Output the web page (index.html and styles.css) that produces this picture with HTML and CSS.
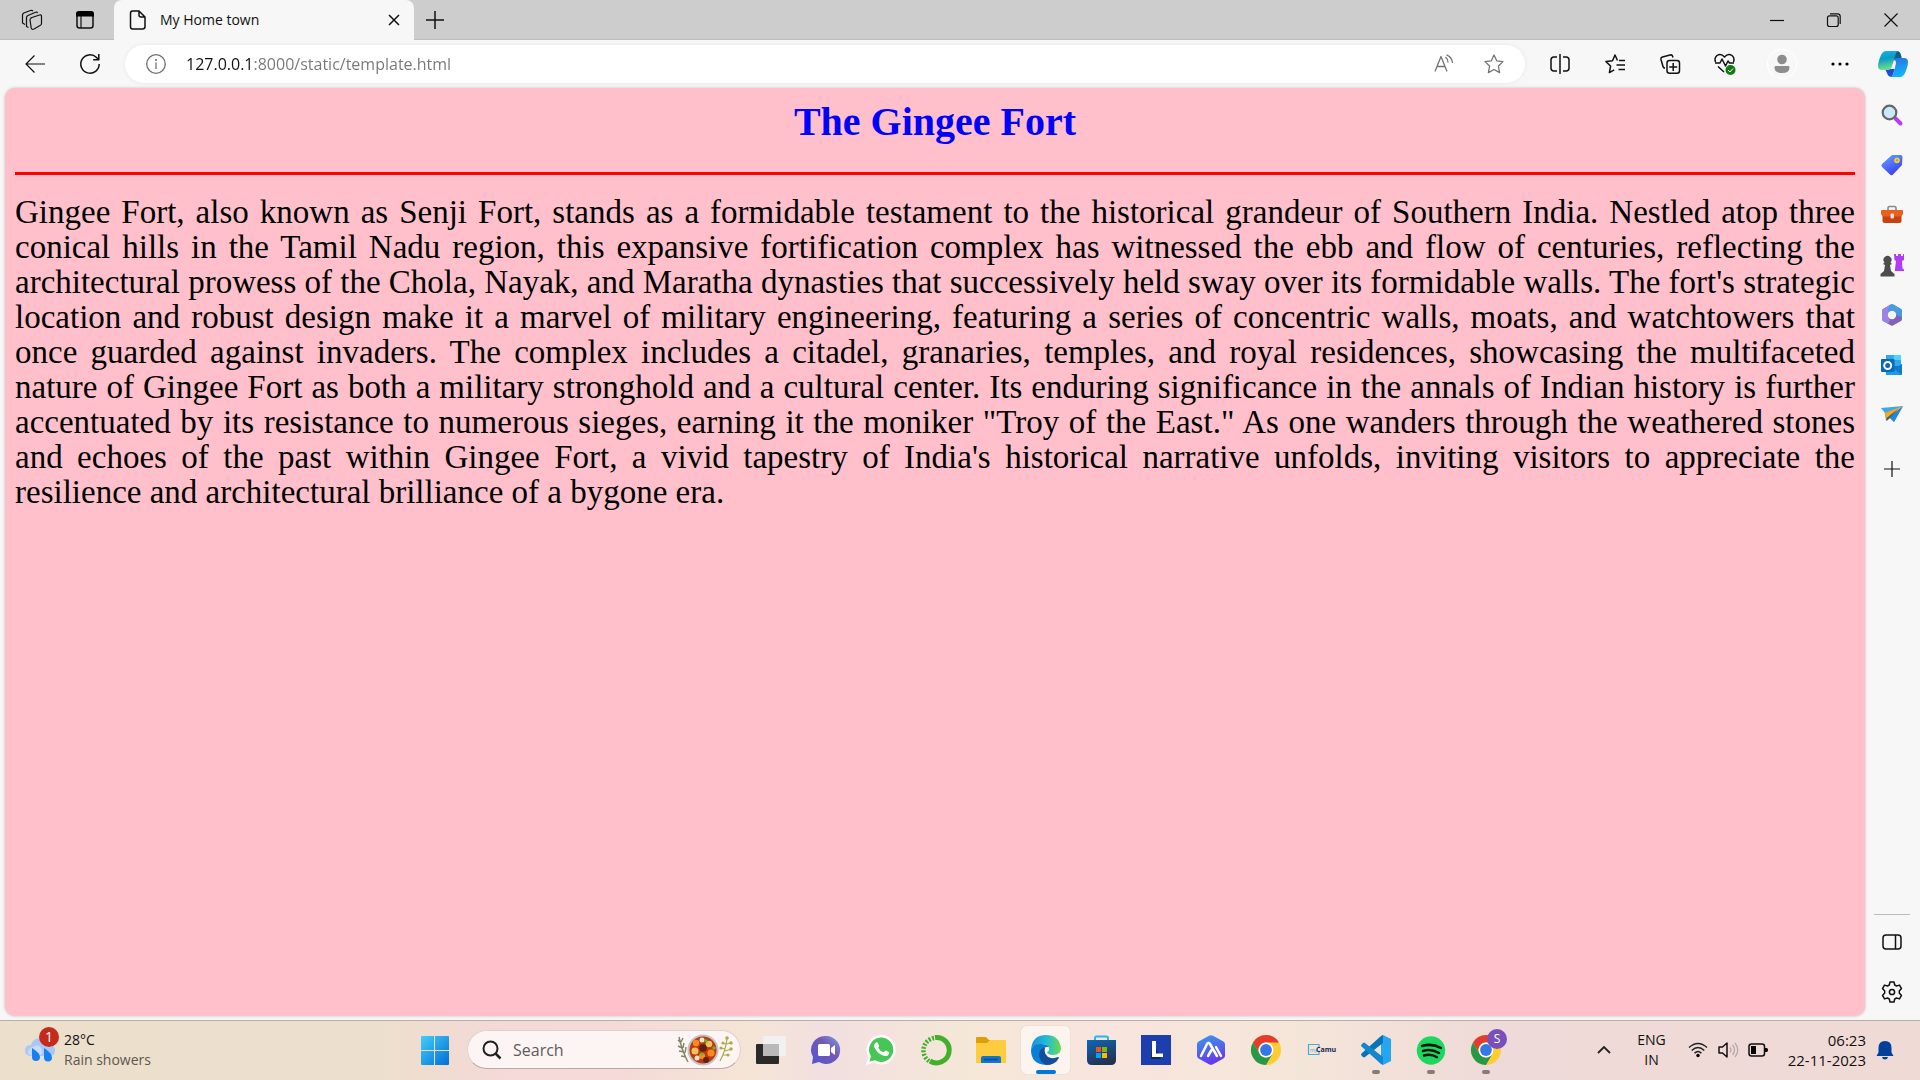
FILE: index.html
```html
<!DOCTYPE html>
<html lang="en">
<head>
<meta charset="utf-8">
<title>My Home town</title>
<link rel="stylesheet" href="styles.css">
</head>
<body>
<div class="desktop">
  <header class="tabstrip">
    <button class="strip-btn" aria-label="Workspaces"><svg class="i22" viewBox="0 0 22 22"><g class="ln"><path d="M9.500 9 18.500 6q2-.6 2 1.500v7q0 1.500-1.500 2l-6 3.500q-2.500 1-2.800-1L9 11q0-1.500 1.500-2z"/><path d="M7.500 18.500 5.500 17.500V8.500q0-1.300 1.500-2l7.500-3.300q1.500-.7 2 1M4 15.500 1.500 14V6q0-1.300 1.300-2L9.500 1.500q1.500-.6 2.500.6"/></g></svg></button>
    <button class="strip-btn" aria-label="Tab actions"><svg class="i20" viewBox="0 0 20 20"><rect class="ln2" x="2" y="2" width="16" height="16" rx="2.500"/><path d="M1 6.500V4q0-3 3-3h12q3 0 3 3v2.500z"/><path class="ln" d="M6 6v12"/></svg></button>
    <div class="tab">
      <svg class="i20" viewBox="0 0 20 20"><path class="ln2" d="M4.500 1H11l6 6v9.500q0 2.500-2.500 2.500h-10Q2.500 19 2.500 16.500v-13Q2.500 1 4.500 1zM11 1v4q0 2 2 2h4"/></svg>
      <span class="tab-title">My Home town</span>
      <button class="tab-close" aria-label="Close tab"><svg class="i12" viewBox="0 0 12 12"><path class="ln2" d="m1 1 10 10M11 1 1 11"/></svg></button>
    </div>
    <button class="new-tab" aria-label="New tab"><svg class="i18" viewBox="0 0 18 18"><path class="ln2" d="M9 0v18M0 9h18"/></svg></button>
    <div class="window-btns">
      <button aria-label="Minimize"><svg class="i14" viewBox="0 0 14 14"><path class="ln" d="M0 7.500h14"/></svg></button>
      <button aria-label="Restore"><svg class="i14" viewBox="0 0 14 14"><path class="ln" d="M3 .8h7.500q2.700 0 2.700 2.700V11M2.500 2.800h6.700q2 0 2 2v6.700q0 2-2 2H2.500q-2 0-2-2V4.800q0-2 2-2z"/></svg></button>
      <button aria-label="Close"><svg class="i14" viewBox="0 0 14 14"><path class="ln" d="m.5.500 13 13M13.500.500l-13 13"/></svg></button>
    </div>
  </header>

  <nav class="toolbar">
    <button class="tool" aria-label="Back"><svg class="i20" viewBox="0 0 20 20"><path class="ln" d="M20 10H1M9.500 1.500 1 10l8.500 8.500"/></svg></button>
    <button class="tool" aria-label="Refresh"><svg class="i20" viewBox="0 0 20 20"><path class="ln2" d="M19.200 10A9.200 9.200 0 1 1 16.500 3.500L18.500 5.500M18.800 0v5.700h-5.600"/></svg></button>
    <div class="address">
      <svg class="i20" viewBox="0 0 20 20"><circle class="gl" cx="10" cy="10" r="9.300"/><path class="gl" d="M10 8.500V15"/><circle cx="10" cy="6" r="1" fill="#666"/></svg>
      <input class="url" type="text" value="127.0.0.1:8000/static/template.html" aria-label="Address">
      <button class="addr-btn" aria-label="Read aloud"><svg class="i20" viewBox="0 0 20 20"><path class="gl" d="M1 17.500 7 2.500l6 15M3 12.500h8M11.500 3q2.500 2 2.500 5.500M12.500.800Q18 3 18.500 9"/></svg></button>
      <button class="addr-btn" aria-label="Favourite"><svg class="i20" viewBox="0 0 20 20"><path class="gl" d="m10 1 2.700 5.800 6.300.8-4.600 4.400 1.200 6.600L10 15.500l-5.600 3.100L5.600 12 1 7.600l6.300-.8z"/></svg></button>
    </div>
    <button class="tool" aria-label="Split screen"><svg class="i20" viewBox="0 0 20 20"><path class="ln2" d="M7 3H4Q1 3 1 6v8q0 3 3 3h3M13 3h3q3 0 3 3v8q0 3-3 3h-3M10 0v20"/></svg></button>
    <button class="tool" aria-label="Favourites"><svg class="i20" viewBox="0 0 20 20"><path class="ln2" d="M12.500 6.500 10 1 7.500 6.800 1 7.600 5.600 12l-1.200 6.600 4.800-2.700M14 6.500h6M11.500 11H20M13.500 15.500H20"/></svg></button>
    <button class="tool" aria-label="Collections"><svg class="i20" viewBox="0 0 20 20"><path class="ln2" d="M13 3.500 12.500 2Q12 .5 10 1L2.500 3Q.5 3.500 1 5.500l2 7q.3 1.500 2 1.800"/><rect class="ln2" x="7" y="6.500" width="12.500" height="12.800" rx="2.500"/><path class="ln2" d="M13.200 9v8M9.200 13h8"/></svg></button>
    <button class="tool" aria-label="Browser essentials"><svg class="i22" viewBox="0 0 22 22"><path class="ln2" d="M1.500 9Q0 5 3 2.500 7-.2 10.500 4 14-.2 18 2.500q3 2.500 1.500 6.500M1 10h5l2-4 3.500 7 2.500-5 1.500 2H20M4 13.500l6 5.500"/><circle cx="16.500" cy="17" r="5" fill="#107c10"/><path d="m14 17 2 2 3-3.500" fill="none" stroke="#fff"/></svg></button>
    <button class="profile" aria-label="Profile"><svg class="i20" viewBox="0 0 20 20"><circle cx="10" cy="5.500" r="4.800" fill="#8d8d8d"/><path d="M3.500 12h13q1 0 1 1.500 0 5.500-7.500 5.500t-7.500-5.500q0-1.500 1-1.500z" fill="#8d8d8d"/></svg></button>
    <button class="tool" aria-label="Settings and more"><svg class="i18" viewBox="0 0 18 18"><circle cx="2" cy="9" r="1.600"/><circle cx="9" cy="9" r="1.600"/><circle cx="16" cy="9" r="1.600"/></svg></button>
    <button class="copilot" aria-label="Copilot"><svg class="i30" viewBox="0 0 30 30">
      <defs><linearGradient id="cpA" x2=".2" y2="1"><stop stop-color="#18b5e8"/><stop offset=".45" stop-color="#0a9bc4"/><stop offset="1" stop-color="#6ce08a"/></linearGradient><linearGradient id="cpB" x2=".2" y2="1"><stop stop-color="#2a72e0"/><stop offset="1" stop-color="#12b4ff"/></linearGradient></defs>
      <path d="M14 2h5q3 0 4 4l1 4h-8z" fill="#0a5f86"/><path d="M7 20h10l-3 8q-4 0-5-4z" fill="#1c4ed8"/>
      <path d="M8 2h12q-2 1-3 5l-3 10q-1 4-4 4H4q-4 0-4-4 0-4 3-11 2-4 5-4z" fill="url(#cpA)"/><path d="M19 9h7q4 0 4 4 0 4-3 11-2 4-5 4h-9q2-1 3-5l2-9q0-4-3-2 1-3 4-3z" fill="url(#cpB)"/></svg></button>
  </nav>

  <div class="workspace">
    <main class="page">
      <h1>The Gingee Fort</h1>
      <hr>
      <p>Gingee Fort, also known as Senji Fort, stands as a formidable testament to the historical grandeur of Southern India. Nestled atop three<br>
      conical hills in the Tamil Nadu region, this expansive fortification complex has witnessed the ebb and flow of centuries, reflecting the<br>
      architectural prowess of the Chola, Nayak, and Maratha dynasties that successively held sway over its formidable walls. The fort's strategic<br>
      location and robust design make it a marvel of military engineering, featuring a series of concentric walls, moats, and watchtowers that<br>
      once guarded against invaders. The complex includes a citadel, granaries, temples, and royal residences, showcasing the multifaceted<br>
      nature of Gingee Fort as both a military stronghold and a cultural center. Its enduring significance in the annals of Indian history is further<br>
      accentuated by its resistance to numerous sieges, earning it the moniker "Troy of the East." As one wanders through the weathered stones<br>
      and echoes of the past within Gingee Fort, a vivid tapestry of India's historical narrative unfolds, inviting visitors to appreciate the<br>
      <span class="last">resilience and architectural brilliance of a bygone era.</span></p>
    </main>

    <aside class="sidebar">
      <button aria-label="Search"><svg class="i22" viewBox="0 0 22 22"><path d="m14.500 14.500 5 5" stroke="#b63cf5" stroke-width="4" stroke-linecap="round"/><circle cx="8.500" cy="8.500" r="6.800" fill="#c9e9fb" stroke="#666" stroke-width="2.200"/></svg></button>
      <button aria-label="Shopping"><svg class="i22" viewBox="0 0 22 22"><defs><linearGradient id="tag" x2=".6" y2="1"><stop stop-color="#69a8ff"/><stop offset="1" stop-color="#3a3df5"/></linearGradient></defs><path d="M11 1h8.500q2 0 2 2l-.5 8-9 9.500q-1.500 1.500-3 0L1 13q-1.200-1.500 0-3z" fill="url(#tag)"/><circle cx="16" cy="6.300" r="2" fill="#69a8ff" stroke="#f8cf20" stroke-width="1.700"/></svg></button>
      <button aria-label="Tools"><svg class="i22" viewBox="0 0 22 22"><path d="M7 6V4q0-1.500 1.500-1.500h5Q15 2.500 15 4v2" fill="none" stroke="#888" stroke-width="1.600"/><path d="M1.500 11h19v6q0 2-2 2h-15q-2 0-2-2z" fill="#c8420f"/><path d="M1 6h20q1 0 1 1v3q-1 2.500-4 2.500H4Q1 12.500 0 10V7q0-1 1-1z" fill="#e8601c"/><rect x="9.500" y="9.500" width="3.500" height="5" rx="1" fill="#ddd"/></svg></button>
      <button aria-label="Games"><svg class="i24" viewBox="0 0 24 24"><path d="M14 1h2v2h2V1h3v2h2V1h1v6l-2 1 .5 7.500 1.500 1V18h-9v-2l1-8-1.500-1z" fill="#b23cf3"/><path d="M4.500 9.500a4 4 0 1 1 6 0L12 11l-2 1 1 6 3.500 3v2.500H.5V21L4 18l1-6-2-1z" fill="#4d4d4d"/></svg></button>
      <button aria-label="Microsoft 365"><svg class="i22" viewBox="0 0 22 22"><path d="M11 0 2 5q-1 .6-1 2v8q0 1.400 1 2l8 4.500q1 .5 2 0l8-4.500q1-.6 1-2V7q0-1.400-1-2z" fill="#8262b9"/><path d="M9 .8 2 5Q1 5.600 1 7v8q0 1.400 1 2l5 2.500 2-3-2-5.500 1-4 3-2z" fill="#9b83e5"/><path d="M9 .8q2-1.300 4 0L20 5q1 .6 1 2v6l-5.500-2L14 8l-3-1.500-4 2Q7 3 9 .8z" fill="#489bdf"/><circle cx="11" cy="11" r="4.200" fill="#f7f7f7"/></svg></button>
      <button aria-label="Outlook"><svg class="i22" viewBox="0 0 22 22"><path d="M5 1h15v19H5z" fill="#0f78d0"/><path d="M5 1h7.500v5H5zM12.500 6H20v6h-7.500z" fill="#32a8ec"/><path d="M12.500 1H20v5h-7.500z" fill="#51d3fb"/><path d="m5 11 8 4 8-5v11H5z" fill="#1b9de9"/><path d="m13 15 8 6V10z" fill="#1479c7"/><rect y="5" width="13.500" height="13" rx="1" fill="#0868bd"/><circle cx="6.700" cy="11.500" r="3.500" fill="none" stroke="#fff" stroke-width="2"/></svg></button>
      <button aria-label="Drop"><svg class="i22" viewBox="0 0 22 22"><path d="M0 4 22 2 13 18l-4-4-4 3-1-8z" fill="#3ba8f3"/><path d="m22 2-9 16-5-5z" fill="#2184e8"/><path d="M22 2 3.500 9l2 6.500z" fill="#f5a720"/><path d="M5.500 17v-3L17 5l-8 9z" fill="#5b5b4a"/></svg></button>
      <button class="add" aria-label="Customize"><svg class="i16" viewBox="0 0 16 16"><path class="ln" d="M8 0v16M0 8h16"/></svg></button>
      <div class="side-foot">
        <button aria-label="Hide sidebar"><svg class="i20" viewBox="0 0 20 20"><path class="ln2" d="M4 3h12q3 0 3 3v8q0 3-3 3H4q-3 0-3-3V6q0-3 3-3zM13.500 3v14"/></svg></button>
        <button aria-label="Settings"><svg class="i22" viewBox="0 0 22 22"><path class="ln2" d="M9 1h4l.7 3 1.800 1 3-.9 2 3.500L18.300 10v2l2.200 2.400-2 3.500-3-.9-1.800 1L13 21H9l-.7-3-1.800-1-3 .9-2-3.500L3.700 12v-2L1.500 7.600l2-3.500 3 .9 1.800-1z"/><circle class="ln2" cx="11" cy="11" r="2.600"/></svg></button>
      </div>
    </aside>
  </div>

  <footer class="taskbar">
    <button class="weather">
      <span class="weather-icon"><svg class="i30" viewBox="0 0 30 30"><path d="M7 21q-7 0-7-5.500Q0 10 6 10q2-7 10-7 8 0 9.500 7 4.500 1 4.500 5.500 0 5.500-5.500 5.500z" fill="#a9c8f5"/><path d="M10 11q5-2 7 4t-8 6q-6 0-6-4 0-4 7-6z" fill="#c8dcfa"/><path d="M7 13q8 5 8 9a4 4 0 0 1-8 0zM19 13q8 5 8 9.500a4 4 0 0 1-8 0z" fill="#1680f2"/></svg><span class="alert">1</span></span>
      <span class="weather-text"><span>28°C</span><span class="soft">Rain showers</span></span>
    </button>

    <div class="apps">
      <button class="app" aria-label="Start"><svg class="i30" viewBox="0 0 30 30"><defs><linearGradient id="win" x2="1" y2="1"><stop stop-color="#45cdfb"/><stop offset="1" stop-color="#006fd4"/></linearGradient></defs><path d="M2 1h12v14H1V2q0-1 1-1zM15 1h13q1 0 1 1v13H15zM1 16h13v14H2q-1 0-1-1zM15 16h14v13q0 1-1 1H15z" fill="url(#win)"/></svg></button>
      <label class="search">
        <svg class="i20" viewBox="0 0 20 20"><circle cx="8.500" cy="8.500" r="7" fill="none" stroke="#222" stroke-width="2"/><path d="m13.500 13.500 5 5" stroke="#222" stroke-width="2.500"/></svg>
        <input type="text" placeholder="Search" aria-label="Search">
        <svg class="bowl" viewBox="0 0 56 32"><g fill="none" stroke="#7f8469" stroke-width="1.400"><path d="M2 3q3 14 9 25M4 9 1 6m4 8-4-2m6 6-5-1m7 6-5-1M4 8l2-4M6 14l1-5m1 10 1-6"/></g><g fill="none" stroke="#aaa94c" stroke-width="1.200"><path d="M50 4q-1 12-7 23M50 10l5-2m-7 9 7-2m-9 6 6 0M49 10l-4-1m3 6-5-1"/></g><g fill="#a9ae4e"><circle cx="50" cy="4" r="1.800"/><circle cx="54" cy="9" r="1.800"/><circle cx="46" cy="9" r="1.600"/><circle cx="54" cy="15" r="1.800"/><circle cx="44" cy="14" r="1.600"/><circle cx="51" cy="21" r="1.600"/></g><circle cx="26" cy="16" r="15.500" fill="#c2c2c8"/><circle cx="26" cy="16" r="13.500" fill="#b93b12"/><g fill="#ff8a1c"><circle cx="19" cy="9" r="3.200"/><circle cx="34" cy="19" r="3.600"/><circle cx="25" cy="22" r="3"/></g><g fill="#f3c15c"><circle cx="32" cy="10" r="3.300"/><circle cx="18" cy="17" r="3.500"/></g><g fill="#f0e5d7"><circle cx="25" cy="6" r="2.500"/><circle cx="20" cy="24" r="2.500"/></g><g fill="#64200e"><circle cx="26" cy="14" r="3.800"/><circle cx="29" cy="26" r="3"/></g><g fill="#65b82a"><circle cx="29" cy="7" r="1.700"/><circle cx="25" cy="20" r="1.700"/><circle cx="37" cy="14" r="1.700"/></g></svg>
      </label>
      <button class="app" aria-label="Task view"><svg class="i30" viewBox="0 0 30 30"><rect y="9" width="23" height="20" rx="1" fill="#2a2a29"/><rect x="7" y="1" width="23" height="20" rx="1" fill="#f1f1f1"/><path d="M7 9h16v12H7z" fill="#bab9b9"/></svg></button>
      <button class="app" aria-label="Chat"><svg class="i30" viewBox="0 0 30 30"><defs><linearGradient id="chat" x1="1" x2="0" y2="1"><stop stop-color="#7ca2f3"/><stop offset=".4" stop-color="#7659ad"/><stop offset="1" stop-color="#5155d6"/></linearGradient></defs><path d="M15 1a14 14 0 1 1-7 26l-7 2 1-7A14 14 0 0 1 15 1z" fill="url(#chat)"/><rect x="7" y="9" width="12" height="12" rx="1.500" fill="#fff"/><path d="m20 13 4-3v10l-4-3z" fill="#fff"/></svg></button>
      <button class="app" aria-label="WhatsApp"><svg class="i30" viewBox="0 0 30 30"><path d="M15 0a14.700 14.700 0 1 1-7 27.600L0 30l2.400-8A14.700 14.700 0 0 1 15 0z" fill="#fff"/><path d="M15 2.500a12.200 12.200 0 1 1-6 22.800L3.500 26.500 5 21.300A12.200 12.200 0 0 1 15 2.500z" fill="#45c655"/><path d="M10 7.500q1.500-.7 2 .7l1 2.500q.3.800-.9 2 2 3.500 5.400 4.800l1.500-1.700q.5-.5 1.200-.2l2.500 1.300q1 .5.300 2-1.300 2.600-4.500 2.100Q11 19 8 11.500 7.700 9 10 7.500z" fill="#fff"/></svg></button>
      <button class="app" aria-label="Anaconda"><svg class="i30" viewBox="0 0 30 30"><path d="M14 2.500A12.700 12.700 0 1 1 9 26" fill="none" stroke="#43b02a" stroke-width="5"/><path d="M13 3A12.700 12.700 0 0 0 8 26" fill="none" stroke="#43b02a" stroke-width="4.500" stroke-dasharray="2 1.500"/></svg></button>
      <button class="app" aria-label="File Explorer"><svg class="i30" viewBox="0 0 30 30"><path d="M1 2h9l3 3h8v8H0V3q0-1 1-1z" fill="#dca006"/><path d="M0 8h11l3-3h15q1 0 1 1v22H0z" fill="#ffcc40"/><path d="M5 28v-5q0-2 2-2h16q2 0 2 2v5z" fill="#1276cd"/><path d="M8 24.500h14" stroke="#084b91" stroke-width="1.500"/></svg></button>
      <button class="app active" aria-label="Edge"><svg class="i30" viewBox="0 0 30 30"><defs><linearGradient id="edge"><stop stop-color="#1b91d8"/><stop offset=".5" stop-color="#24b9d9"/><stop offset="1" stop-color="#66de48"/></linearGradient></defs><path d="M0 15Q1 0 15 0q13 0 15 13 0 7-8 7-5 0-6-3 3-1 2-4-1-4-7-4Q3 9 0 15z" fill="url(#edge)"/><path d="M0 15Q3 8 10 9q6 0 8 3-8-1-8 6 0 8 9 9 5 0 8-2-4 5-12 5Q0 29 0 15z" fill="#087ed5"/><path d="M14 12q-6 2-6 8 1 8 8 10 7 0 12-7 0-1-1-1-3 1.500-7 1-8-2-6-11z" fill="#114f9b"/></svg></button>
      <button class="app" aria-label="Microsoft Store"><svg class="i30" viewBox="0 0 30 30"><defs><linearGradient id="store" x2=".4" y2="1"><stop stop-color="#0b69b8"/><stop offset="1" stop-color="#243252"/></linearGradient></defs><path d="M9 6V3q0-1.500 1.500-1.500h10Q22 1.500 22 3v3" fill="none" stroke="#27b7ef" stroke-width="2"/><path d="M1 5h29v20q0 5-5 5H6q-5 0-5-5z" fill="url(#store)"/><path d="M10 12h5v5h-5z" fill="#f25022"/><path d="M16 12h5v5h-5z" fill="#7fba00"/><path d="M10 18h5v5h-5z" fill="#00a4ef"/><path d="M16 18h5v5h-5z" fill="#ffb900"/></svg></button>
      <button class="app" aria-label="LockDown"><svg class="i30" viewBox="0 0 30 30"><path d="M0 0h30v30H0z" fill="#1d3eae"/><path d="m11 6-1 18h10z" fill="#0b2d46"/><path d="M11 6h4v12.500h7V22H11z" fill="#fff"/></svg></button>
      <button class="app" aria-label="AI assistant"><svg class="i30" viewBox="0 0 30 30"><defs><linearGradient id="ai" x2=".3" y2="1"><stop stop-color="#3a9be8"/><stop offset="1" stop-color="#6439ef"/></linearGradient></defs><path d="M13 .8q2-1 4 0l10 5.500q2 1 2 3v11.500q0 2-2 3l-10 5.500q-2 1-4 0L3 23.800q-2-1-2-3V9.300q0-2 2-3z" fill="url(#ai)"/><path d="m5 21 6-12q1.500-2.500 3 0l7 12M12 21l3.500-6M20 12l5 9" fill="none" stroke="#fff" stroke-width="2.500" stroke-linecap="round"/></svg></button>
      <button class="app" aria-label="Chrome"><svg class="i30" viewBox="0 0 30 30"><g id="chrome"><circle cx="15" cy="15" r="15" fill="#ffcd32"/><path d="M2 7.500A15 15 0 0 1 28 7.500H15A7.500 7.500 0 0 0 8.500 19z" fill="#e33b2e"/><path d="M2 7.500 8.500 18.800A7.500 7.500 0 0 0 21.500 18.800L15 30A15 15 0 0 1 2 7.500z" fill="#279847"/><circle cx="15" cy="15" r="7.400" fill="#fff"/><circle cx="15" cy="15" r="5.900" fill="#3478e8"/></g></svg></button>
      <button class="app" aria-label="myCamu"><svg class="i30" viewBox="0 0 30 30"><path d="M13 12V9.500H2.500v10H13V17" fill="none" stroke="#48acd4" stroke-width="1.200"/><text x="4" y="17" class="my">my</text><text x="10" y="17" class="camu">Camu</text></svg></button>
      <button class="app running" aria-label="VS Code"><svg class="i30" viewBox="0 0 30 30"><path d="m22 0 8 4v22l-8 4-2-3V3z" fill="#25a5f2"/><path d="M22 0v8L4 22q-1 .8-2 0L.5 20.500q-1-1 0-2L20 1z" fill="#0872b9"/><path d="M22 30v-8L4 8Q3 7.200 2 8L.5 9.500q-1 1 0 2L20 29z" fill="#1187ce"/></svg></button>
      <button class="app running" aria-label="Spotify"><svg class="i30" viewBox="0 0 30 30"><circle cx="15" cy="15.500" r="14.200" fill="#1ed760"/><path d="M6 11q10-3 19 2M7 16q8-2.500 16 2M8 20.500q7-2 13 1.700" fill="none" stroke="#08160d" stroke-width="2.500" stroke-linecap="round"/></svg></button>
      <button class="app running" aria-label="Chrome profile"><svg class="i30" viewBox="0 0 30 30"><use href="#chrome"/></svg><span class="badge">S</span></button>
    </div>

    <div class="tray">
      <button aria-label="Hidden icons"><svg class="i14" viewBox="0 0 14 14"><path d="m1 10 6-6 6 6" fill="none" stroke="#222" stroke-width="1.800"/></svg></button>
      <button class="lang"><span>ENG</span><span>IN</span></button>
      <button class="status" aria-label="Network, volume, battery">
        <svg class="i20" viewBox="0 0 20 20"><g fill="none" stroke="#222" stroke-width="1.500"><path d="M1 7.500q9-8 18 0M3.700 10.500q6.300-6 12.600 0M6.500 13.300q3.500-3.500 7 0"/></g><circle cx="10" cy="15.500" r="1.700"/></svg>
        <svg class="i20" viewBox="0 0 20 20"><path class="ln2" d="M1 7h3.500L9 3v14l-4.500-4H1z"/><path d="M12 7.500q2 2.500 0 5M14.500 5q4 5 0 10M17 3q5.500 7 0 14" fill="none" stroke="#b5aaa8" stroke-width="1.300"/></svg>
        <svg class="i20" viewBox="0 0 20 20"><rect class="ln2" x="1" y="4" width="15.500" height="12" rx="2.500"/><path d="M3 6h5v8H3zM17 8h1.500q1.500 0 1.500 2t-1.500 2H17z"/></svg>
      </button>
      <button class="clock"><span>06:23</span><span>22-11-2023</span></button>
      <button aria-label="Notifications"><svg class="i20" viewBox="0 0 20 20"><path d="M3.500 8q0-7 6.500-7t6.500 7v4.500L18.500 16h-17l2-3.500zM7 17h6q-.5 2.500-3 2.500T7 17z" fill="#003f9a"/></svg></button>
    </div>
  </footer>
</div>
</body>
</html>
```
FILE: styles.css
```css
* { box-sizing: border-box; }

body {
  margin: 0;
  font-family: "Open Sans", "Noto Sans", sans-serif;
  font-size: 14px;
  color: #111;
}

button {
  display: flex;
  align-items: center;
  justify-content: center;
  padding: 0;
  border: 0;
  background: none;
  font: inherit;
  color: inherit;
}

input {
  min-width: 0;
  padding: 0;
  border: 0;
  background: none;
  font: inherit;
  outline: 0;
}

svg { display: block; flex: none; overflow: visible; }
.i12 { width: 12px; height: 12px; }
.i14 { width: 14px; height: 14px; }
.i16 { width: 16px; height: 16px; }
.i18 { width: 18px; height: 18px; }
.i20 { width: 20px; height: 20px; }
.i22 { width: 22px; height: 22px; }
.i24 { width: 24px; height: 24px; }
.i30 { width: 30px; height: 30px; }
.ln { fill: none; stroke: #111; stroke-width: 1.2; }
.ln2 { fill: none; stroke: #111; stroke-width: 1.5; stroke-linejoin: round; }
.gl { fill: none; stroke: #737373; stroke-width: 1.3; stroke-linejoin: round; }

.desktop {
  display: flex;
  flex-direction: column;
  min-height: 100vh;
  background: #f7f7f7;
}

/* Tab strip */
.tabstrip {
  display: flex;
  height: 40px;
  padding-left: 5px;
  background: #cdcdcd;
  box-shadow: inset 0 -1px #bdbdbd;
}
.strip-btn { width: 53px; }
.tab {
  display: flex;
  align-items: center;
  width: 300px;
  margin-left: 3px;
  padding: 0 14px;
  border-radius: 8px 8px 0 0;
  background: #f7f7f7;
}
.tab-title { flex: 1; margin-left: 12px; padding-bottom: 1px; }
.tab-close { width: 12px; height: 20px; }
.new-tab { width: 42px; }
.window-btns { display: flex; margin-left: auto; padding: 0 1px 1px 0; }
.window-btns button { width: 57px; }

/* Toolbar */
.toolbar {
  display: flex;
  align-items: center;
  height: 48px;
  padding: 0 12px 1px 7px;
}
.tool { width: 55px; height: 40px; }
.address {
  display: flex;
  flex: 1;
  align-items: center;
  height: 38px;
  margin: 0 7px 0 8px;
  padding: 0 21px;
  border-radius: 19px;
  background: #fff;
  box-shadow: 0 0 4px #e6e6e6;
}
.url {
  flex: 1;
  height: 30px;
  margin-left: 20px;
  font-size: 16px;
  color: #777;
  background: linear-gradient(90deg, #111 68px, #777 68px);
  background-clip: text;
  -webkit-background-clip: text;
  -webkit-text-fill-color: transparent;
}
.addr-btn { width: 20px; height: 30px; margin-left: 30px; }
.profile {
  width: 28px;
  height: 28px;
  margin: 0 16px;
  border-radius: 50%;
  box-shadow: 0 0 0 1px #fff;
}
.copilot { width: 30px; margin-left: 11px; }

/* Page and sidebar */
.workspace { display: flex; flex: 1; }
.page {
  flex: 1;
  margin: 0 0 4px 5px;
  padding: 10px;
  border-radius: 10px;
  background: #ffc0cb;
  box-shadow: 0 0 3px #bbb;
  font-family: Georgia, "Liberation Serif", serif;
  color: #000;
}
h1 {
  margin: 0 0 27px;
  font: bold 40px/47px "Liberation Serif", serif;
  text-align: center;
  color: #00f;
}
hr { height: 3px; margin: 0; border: 0; background: #f00; }
p {
  margin: 20px 0 0;
  font-size: 33px;
  line-height: 35px;
  text-align: justify;
  text-align-last: justify;
}
.last { display: block; text-align-last: left; }

.sidebar {
  display: flex;
  flex-direction: column;
  align-items: center;
  width: 55px;
  padding: 2px 1px 0 0;
}
.sidebar button { width: 40px; height: 50px; }
.sidebar .add { height: 58px; }
.side-foot {
  margin-top: auto;
  padding: 2px 0 3px;
  border-top: 1px solid #bbb;
}
.side-foot button { width: 36px; }

/* Taskbar */
.taskbar {
  display: grid;
  grid-template-columns: 1fr auto 1fr;
  height: 60px;
  padding-bottom: 2px;
  border-top: 1px solid #b8adab;
  background: linear-gradient(90deg, #ecdfcc 0, #eddfcd 20%, #f3d9d7 26%, #f4dad8 32%, #f5e5d6 39%, #f2dfe1 43%, #f5e7d8 50%, #f8e5de 58%, #f5e6d9 67%, #eedad8 78%, #f0dad6 100%);
}
.weather {
  justify-self: start;
  padding-left: 25px;
  gap: 9px;
  line-height: 20px;
}
.weather-icon { position: relative; }
.alert, .badge {
  position: absolute;
  width: 20px;
  height: 20px;
  border-radius: 50%;
  color: #fff;
  text-align: center;
  line-height: 20px;
}
.alert { top: -8px; right: -4px; background: #c42b1c; }
.weather-text { display: flex; flex-direction: column; align-items: flex-start; }
.soft { color: #5d574f; }

.apps { display: flex; align-items: center; }
.app {
  position: relative;
  width: 49px;
  height: 48px;
  margin: 0 3px;
  border-radius: 5px;
}
.active { background: #fdf3ef; box-shadow: 0 0 1px #bbb; }
.active::after, .running::after {
  content: "";
  position: absolute;
  bottom: 0;
  width: 20px;
  height: 4px;
  border-radius: 2px;
  background: #0078d4;
}
.running::after { width: 8px; background: #857b78; }
.badge { top: 3px; right: 3px; background: #7950ba; font-size: 12px; }
.my { font-size: 5px; fill: #48acd4; }
.camu { font-size: 7px; font-weight: bold; fill: #1c2848; }
.search {
  display: flex;
  align-items: center;
  width: 274px;
  height: 39px;
  margin: 0 2px 0 5px;
  padding: 0 7px 0 14px;
  border: 1px solid #e5cfcd;
  border-bottom-color: #b9a9a8;
  border-radius: 20px;
  background: #fdf5f3;
}
.search input { flex: 1; margin-left: 11px; font-size: 16px; }
.search input::placeholder { color: #605b5b; opacity: 1; }
.bowl { width: 56px; height: 32px; }

.tray {
  display: flex;
  justify-self: end;
  align-items: center;
  padding-right: 25px;
  line-height: 20px;
}
.lang, .clock { flex-direction: column; }
.lang { margin-left: 26px; }
.status { gap: 10px; margin: 0 20px 0 22px; }
.clock { align-items: flex-end; margin-right: 9px; font-size: 15px; }
```
